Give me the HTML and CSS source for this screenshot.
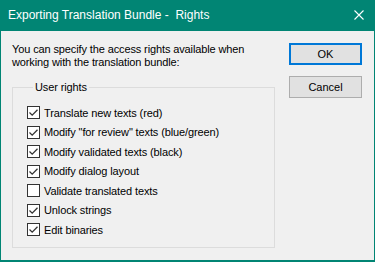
FILE: index.html
```html
<!DOCTYPE html>
<html lang="en">
<head>
    <meta charset="UTF-8">
    <title>Exporting Translation Bundle - Rights</title>
    <link rel="stylesheet" href="styles.css">
</head>
<body>
    <div class="window">
        <div class="titlebar">
            <span class="title">Exporting Translation Bundle -&nbsp; Rights</span>
            <svg class="close" width="10" height="10" viewBox="0 0 10 10">
                <path d="M0.5 0.5 L9.5 9.5 M9.5 0.5 L0.5 9.5" stroke="#fff" stroke-width="1.1" fill="none"/>
            </svg>
        </div>
        <div class="client">
            <div class="main">
                <p class="intro">You can specify the access rights available when<br>working with the translation bundle:</p>
                <fieldset class="group">
                    <legend>User rights</legend>
                    <ul class="rights">
                        <li><span class="box on"></span>Translate new texts (red)</li>
                        <li><span class="box on"></span>Modify "for review" texts (blue/green)</li>
                        <li><span class="box on"></span>Modify validated texts (black)</li>
                        <li><span class="box on"></span>Modify dialog layout</li>
                        <li><span class="box"></span>Validate translated texts</li>
                        <li><span class="box on"></span>Unlock strings</li>
                        <li><span class="box on"></span>Edit binaries</li>
                    </ul>
                </fieldset>
            </div>
            <div class="buttons">
                <button class="btn default">OK</button>
                <button class="btn">Cancel</button>
            </div>
        </div>
    </div>
    <script>
        // draw the check marks
        document.querySelectorAll('.box.on').forEach((box) => {
            box.innerHTML = '<svg width="11" height="11" viewBox="0 0 11 11"><path d="M1.5 5.5 L4.2 8.2 L9.5 2.8" stroke="#333" stroke-width="1.3" fill="none"/></svg>';
        });
    </script>
</body>
</html>
```
FILE: styles.css
```css
* {
    margin: 0;
    padding: 0;
    box-sizing: border-box;
}
body {
    font-family: 'Liberation Sans', Arial, sans-serif;
    font-size: 11px;
    letter-spacing: -0.12px;
    color: #000;
    background-color: #f0f0f0;
    width: 375px;
    height: 262px;
    overflow: hidden;
}
.window {
    width: 375px;
    height: 262px;
    border: 1px solid #018574;
    border-top: none;
    border-bottom-width: 2px;
    display: flex;
    flex-direction: column;
}
.titlebar {
    height: 31px;
    background-color: #018574;
    color: #fff;
    display: flex;
    align-items: center;
    justify-content: space-between;
    padding: 0 10px 1px 8px;
    margin: 0 -1px;
}
.title {
    font-size: 12px;
    letter-spacing: 0;
    font-family: 'Liberation Sans', Arial, sans-serif;
}
.close {
    display: block;
    margin-right: 1px;
}
.client {
    flex: 1;
    display: flex;
    padding: 12px 12px 0 11px;
}
.main {
    width: 263px;
}
.intro {
    line-height: 13px;
}
.group {
    margin-top: 12px;
    border: 1px solid #dcdcdc;
    padding: 0 0 7px 14px;
    height: 167px;
}
.group legend {
    margin-left: 6px;
    padding: 0 2px;
    line-height: 13px;
}
.rights {
    list-style: none;
    margin-top: 9px;
}
.rights li {
    height: 19.5px;
    display: flex;
    align-items: center;
    gap: 4px;
}
.box {
    width: 13px;
    height: 13px;
    border: 1px solid #333;
    background-color: #fff;
    display: flex;
    align-items: center;
    justify-content: center;
}
.box svg {
    display: block;
}
.buttons {
    margin-left: 14px;
    display: flex;
    flex-direction: column;
    gap: 11px;
}
.btn {
    width: 73px;
    height: 22px;
    font-family: 'Liberation Sans', Arial, sans-serif;
    font-size: 11px;
    background-color: #e1e1e1;
    border: 1px solid #adadad;
    color: #000;
}
.btn.default {
    border: 2px solid #0078d7;
}
```
